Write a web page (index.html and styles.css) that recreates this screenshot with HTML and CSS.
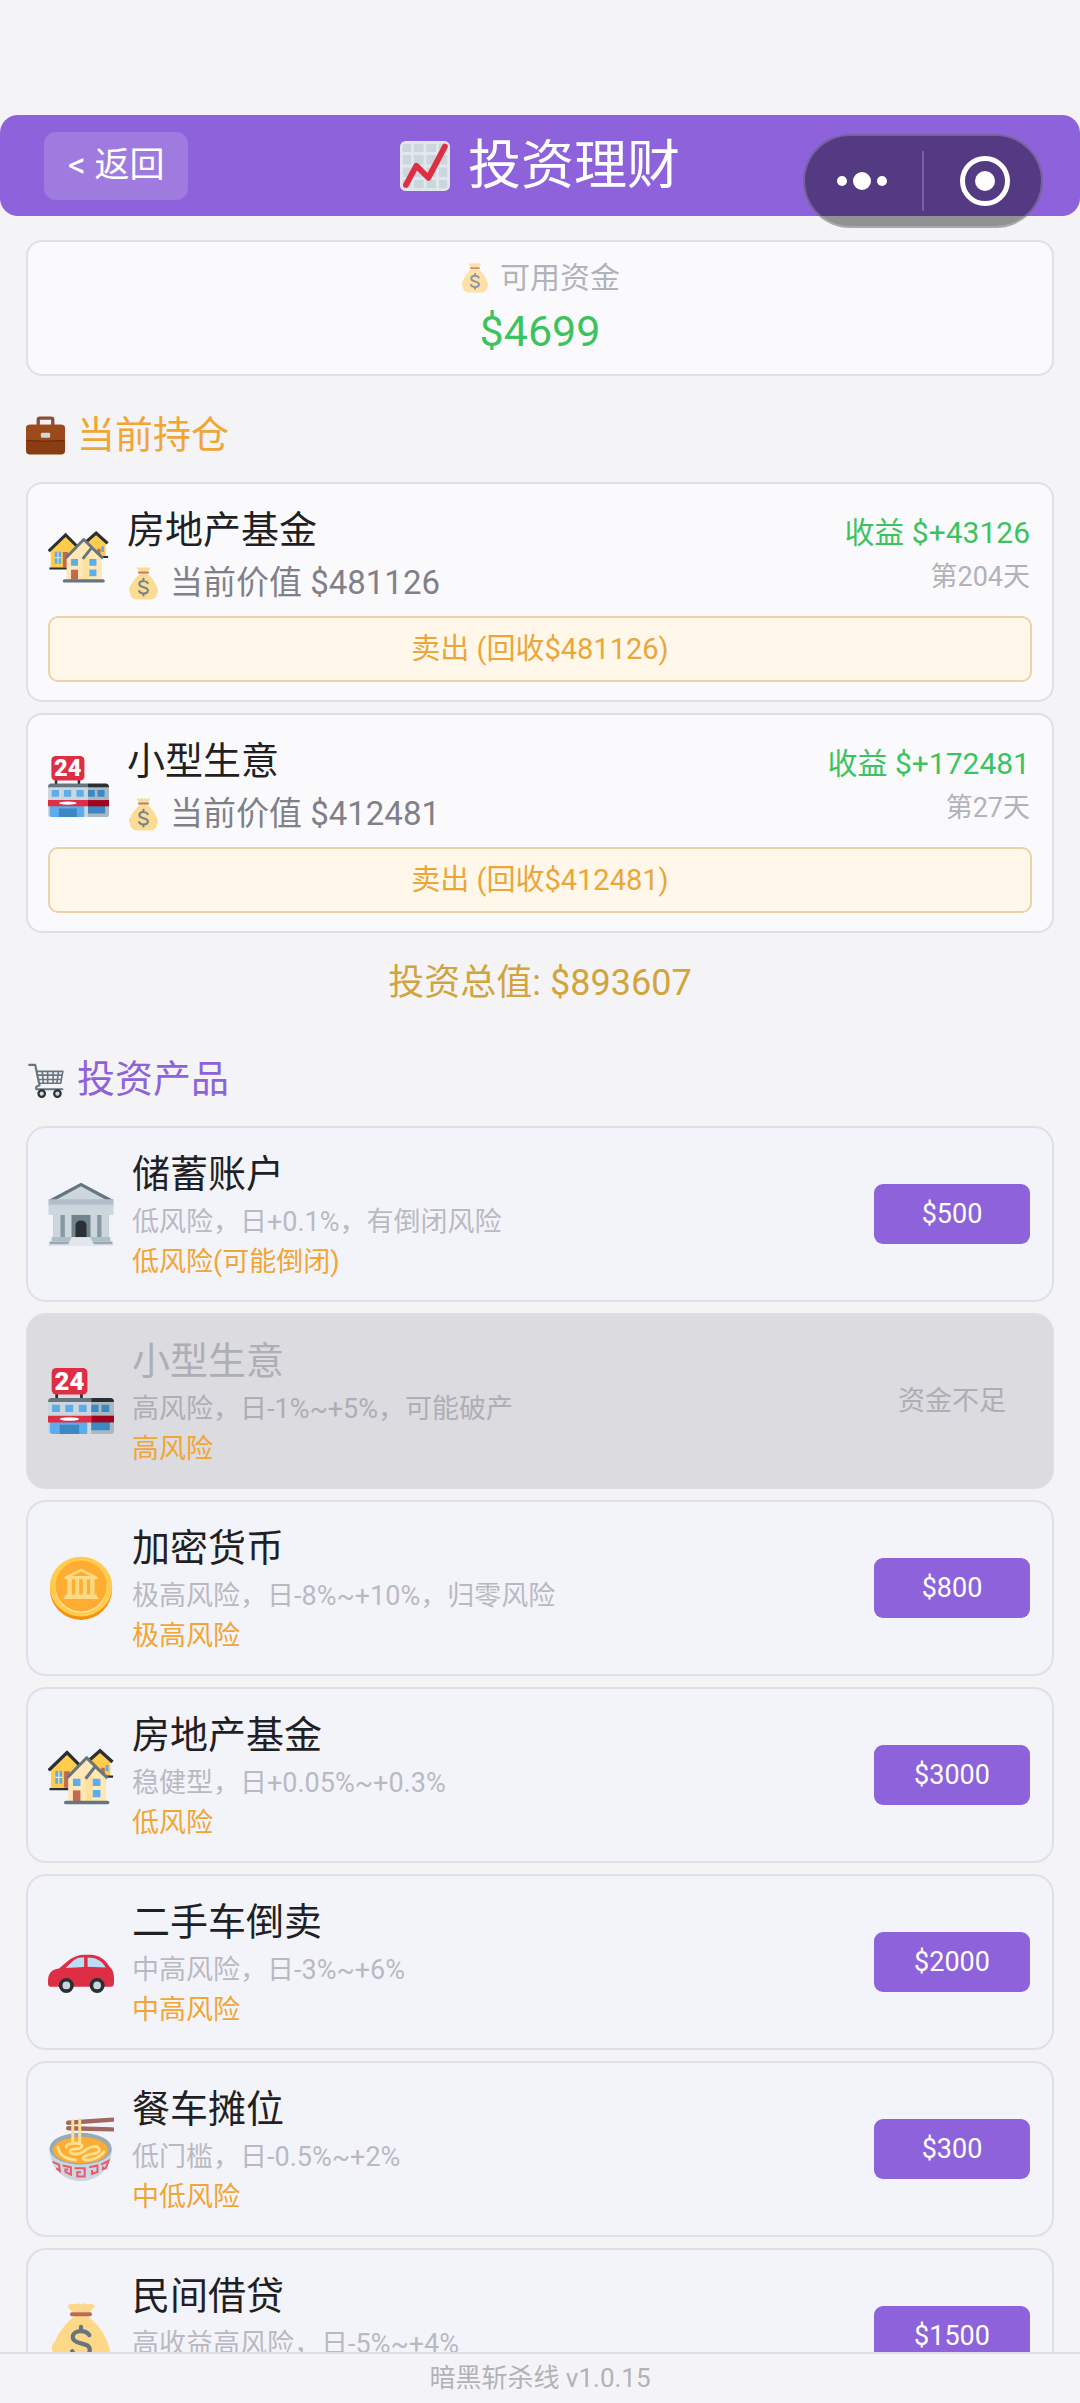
FILE: index.html
```html
<!DOCTYPE html>
<html lang="zh-CN">
<head>
    <meta charset="UTF-8">
    <meta name="viewport" content="width=device-width, initial-scale=1.0">
    <title>投资理财</title>
    <link rel="stylesheet" href="styles.css">
</head>
<body>
    <!-- icon sprite -->
    <svg class="sprite" aria-hidden="true">
        <symbol id="chart" viewBox="0 0 36 36">
            <rect width="36" height="36" rx="4" fill="#e1e8ed"/>
            <path fill="#ccd6dd" d="M2 2h6v6H2zM10 2h7v6h-7zM19 2h7v6h-7zM28 2h6v6h-6zM2 10h6v7H2zM10 10h7v7h-7zM19 10h7v7h-7zM28 10h6v7h-6zM2 19h6v7H2zM10 19h7v7h-7zM19 19h7v7h-7zM28 19h6v7h-6zM2 28h6v6H2zM10 28h7v6h-7zM19 28h7v6h-7zM28 28h6v6h-6z"/>
            <path d="M4.3 31.6L11.8 17.8L20.4 26.5L32.3 4" fill="none" stroke="#dd2e44" stroke-width="4.2" stroke-linecap="round" stroke-linejoin="round"/>
        </symbol>
        <symbol id="bag" viewBox="0 0 36 36">
            <path fill="#fdd888" d="M14.5 7C9 12 5 17 4.2 20.5C2.4 22 1.8 24 2.3 26C2.8 27.4 3.4 28 3.6 29C4 33 7 35.5 11 35.5H25C29.5 35.5 32 33 32.3 30C34 28.6 34.6 26 33 23C31.5 17 27 11.500 21.500 7z"/>
            <path fill="#fdd888" d="M13.300 5L10.700 2C11 .2 13 0 14 1C15 0 17 0 18 1C19 0 21 0 22 1C23 0 25 .2 25.300 2L22.700 5z"/>
            <rect x="12" y="5" width="12" height="2.200" rx="1" fill="#bf6952"/>
            <path fill="none" stroke="#67757f" stroke-width="2.300" stroke-linecap="round" d="M18 13v2M22.500 17.500C21.500 15.800 19.800 15.300 18 15.300C15.500 15.300 13.500 16.500 13.500 18.600C13.500 20.900 15.500 21.500 18 22C20.700 22.600 22.800 23.200 22.800 25.600C22.800 27.800 20.600 28.900 18 28.900C15.800 28.900 14 28.100 13.200 26.300M18 29v2"/>
        </symbol>
        <symbol id="briefcase" viewBox="0 0 36 36">
            <path d="M11.300 9V3.500Q11.300 2 12.800 2H23.200Q24.700 2 24.700 3.500V9" fill="none" stroke="#8a4b38" stroke-width="3"/>
            <rect y="8" width="36" height="27.500" rx="3.500" fill="#8a3c12"/>
            <path d="M0 11.500Q0 8 3.500 8H32.500Q36 8 36 11.500V21Q36 23 34 23H2Q0 23 0 21z" fill="#9c4a1a"/>
            <path d="M.5 22.500Q18 24 35.500 22.500" fill="none" stroke="#6b2b0c" stroke-width="1"/>
            <rect x="13.700" y="15.500" width="8.600" height="4.500" rx="1" fill="#ccd6dd"/>
        </symbol>
        <symbol id="cart" viewBox="0 0 36 36">
            <g fill="none" stroke="#66757f" stroke-linecap="round" stroke-linejoin="round">
                <path stroke-width="2" d="M3 4.500H8.500L12.500 23.500Q8.500 24 9.500 27H33.500"/>
                <path stroke-width="1.500" d="M10 10.500H34L32 21.500H12.200M10.500 14H33.500M11.500 18H32.500M15 10.500L16 21.500M20 10.500V21.500M25 10.500V21.500M30 10.500L28.500 21.500"/>
            </g>
            <circle cx="14.500" cy="31" r="3" fill="#ccd6dd" stroke="#292f33" stroke-width="2"/>
            <circle cx="29" cy="31" r="3" fill="#ccd6dd" stroke="#292f33" stroke-width="2"/>
        </symbol>
        <symbol id="houses" viewBox="0 0 36 36">
            <g transform="translate(0 1)">
                <path fill="#ffcc4d" d="M22 9.500L28.400 4L34 9.500V17.500H22z"/>
                <path fill="#ffcc4d" d="M1.600 14L10.400 5L19 14V24.500H1.600z"/>
                <path fill="#c1694f" d="M29 13h2v4h-2zM8.800 15h3v9h-3z"/>
                <path fill="#5dadec" d="M31.500 11.500h1.500v3.500h-1.500zM4 14.800h3.700v7H4z"/>
                <path stroke="#ffe8b6" stroke-width=".6" d="M4 18.300H7.700M5.900 14.800V21.800"/>
                <path fill="none" stroke="#292f33" stroke-width="1.800" d="M.4 14.500L10.400 4.800L18 12.400M22.500 9L28.400 3.800L35.200 9.900"/>
                <path stroke="#292f33" stroke-width="1.200" d="M.8 24.700H12M30 17.900H35.500"/>
                <path fill="#ffe8b6" d="M11 18L21 8L26 12.500L31.700 18V31.500H11z"/>
                <path fill="#ffd983" d="M20.600 19L24 14.500V31H20.600z" opacity=".55"/>
                <path fill="none" stroke="#66757f" stroke-width="1.700" stroke-linejoin="round" d="M10.500 18.500L21.100 7.600L26.200 12.600M20.500 19L25.800 12.300L32.500 18.700"/>
                <path fill="#5dadec" d="M13.600 19h4.100v4h-4.100zM24.400 19h4.200v4h-4.200zM24.400 25.200h4.200v4h-4.200z"/>
                <path fill="#c1694f" d="M13.600 25.400h4.100v5.800h-4.100z"/>
                <rect x="8.700" y="31" width="24.800" height="2" rx="1" fill="#66757f"/>
            </g>
        </symbol>
        <symbol id="store" viewBox="0 0 36 36">
            <path fill="#292f33" d="M4 13h1.500v4H4zM17.500 13h1.500v4h-1.500z"/>
            <rect x="2" width="19.500" height="14.500" rx="2.500" fill="#dd2e44"/>
            <text class="store-sign" x="11.700" y="12" text-anchor="middle">24</text>
            <path fill="#66757f" d="M0 18.500Q0 16.300 2 16.300H23.600V19H0z"/>
            <path fill="#292f33" d="M23.600 16.300H34Q36 16.300 36 18.500V19H23.600z"/>
            <path fill="#ccd6dd" d="M0 18.500H23.600V36H1.500Q0 36 0 34.500z"/>
            <path fill="#aab8c2" d="M23.600 18.500H36V34.500Q36 36 34.500 36H23.600z"/>
            <path fill="#5dadec" d="M2.200 20h4.300v4H2.200zM9.400 20h4.300v4H9.400zM16.800 20h4.300v4h-4.300zM1 29.500H21.400V36H2.500Q1 36 1 34.500z"/>
            <path fill="#3b88c3" d="M23.600 20h4v4h-4zM29.200 20h4.200v4h-4.200zM6.400 31H17V36H6.400zM23.600 29.500H33.700V34H23.600z"/>
            <path fill="#dd2e44" d="M0 26H23.600V29.700H0z"/>
            <path fill="#a0041e" d="M23.600 26H36V29.700H23.600z"/>
            <ellipse cx="11.700" cy="27.800" rx="5.200" ry="1" fill="#fff"/>
        </symbol>
        <symbol id="bank" viewBox="0 0 36 36">
            <path fill="#8899a6" d="M3 18H33V31H3z"/>
            <path fill="#66757f" d="M18 1L36 10.500H0z"/>
            <path fill="#ccd6dd" d="M18 2.800L32 10.500H4z"/>
            <path fill="#b0bec7" d="M.3 10H35.700V13.500H.3z"/>
            <path fill="#ccd6dd" d="M.3 13H35.700V18.500H.3zM3 18.500H6.800V31H3zM9.200 18.500H12.800V31H9.200zM23.200 18.500H26.800V31H23.200zM29.200 18.500H33V31H29.200z"/>
            <path fill="#66757f" d="M13 18.500H23V31H13z" opacity=".6"/>
            <path fill="#292f33" d="M15 31V24.500Q15 21.500 18 21.500T21 24.500V31z"/>
            <path fill="#b0bec7" d="M2 30.500H34V33H2z"/>
            <path fill="#99aab5" d="M.8 33H35.200V35H.8z"/>
            <path fill="#e1e8ed" d="M13 30.700H23L25 34.500H36V35.500H0V34.500H11z"/>
        </symbol>
        <symbol id="coin" viewBox="0 0 36 36">
            <circle cx="18" cy="18.400" r="17" fill="#f4900c"/>
            <ellipse cx="18" cy="17.300" rx="17" ry="16.300" fill="#ffcc4d"/>
            <ellipse cx="18" cy="17.500" rx="14" ry="14" fill="#ffe8b6"/>
            <ellipse cx="18" cy="16.900" rx="14" ry="13.900" fill="#ffac33"/>
            <path fill="#ffd983" d="M18 7.500L27 11.800V13.200H9V11.800zM10.600 13H13V22H10.600zM14.800 13H17V22H14.800zM19 13H21.200V22H19zM23 13H25.400V22H23zM9.600 21.500H26.400L27.500 24H8.500z"/>
            <path fill="#ffac33" d="M18 9L23 11.500H13z"/>
        </symbol>
        <symbol id="car" viewBox="0 0 36 36">
            <path fill="#dd2e44" d="M0 28.500C0 24 2 22 6 21.500C10 18.500 13 14 20 14H23C28 14 31.500 17 33.500 20.500C35.300 22 36 24 36 27V29.500Q36 31.500 34.300 31.500H1.700Q0 31.500 0 29.800z"/>
            <path fill="#bbddf5" d="M9.600 21.300L14 17C15.500 15.800 17 15.500 19.700 15.500V20.700zM21.600 15.500C26 15.500 29.500 17.200 31.500 21L21.600 20.600z"/>
            <circle cx="10" cy="30.800" r="3.100" fill="#ccd6dd" stroke="#292f33" stroke-width="2"/>
            <circle cx="26.800" cy="30.800" r="3.100" fill="#ccd6dd" stroke="#292f33" stroke-width="2"/>
        </symbol>
        <symbol id="noodles" viewBox="0 0 36 36">
            <path fill="#ccd6dd" d="M.9 18C.9 28.500 8.500 35.500 17.800 35.500S34.800 28.500 34.800 18z"/>
            <ellipse cx="17.800" cy="17.800" rx="17" ry="8.700" fill="#99aab5"/>
            <ellipse cx="17.800" cy="18.600" rx="15" ry="7.200" fill="#ffac33"/>
            <path d="M11 3.700L35.300 2M11 6.700L35.300 7.300" stroke="#a0695f" stroke-width="2.400" stroke-linecap="round"/>
            <g fill="none" stroke="#ffe08f" stroke-width="1.600" stroke-linecap="round">
                <path d="M13.500 2.500V14.500M17.300 2V14.500"/>
                <path d="M5.500 17C6 21 9 23.500 15 24M10 17C10 14.500 19 14 18.500 16.500C18 19 13 17 12 19C11.500 21 17 21.500 20 19C23 16 28 16 28 18.500C28 21 20 20.500 19 23C20 25 28 23.500 30.500 19.500"/>
            </g>
            <path fill="none" stroke="#e75a70" stroke-width="1.100" d="M2.500 25L6 26.500L6.500 30L4.500 28.500M8 27L12.500 28V32L9.500 30.500V29.200H11M14.500 28.500H20V33H16V30.700H18M22.500 28L27 27V30.500L24 31.500V29.500M29 26.500L33 24.500L31.500 28.500L30 29V27.500"/>
        </symbol>
    </svg>

    <div class="app">
        <header class="topbar">
            <button class="back-button" type="button">&lt; 返回</button>
            <h1 class="page-title"><svg class="icon-title"><use href="#chart"/></svg>投资理财</h1>
        </header>

        <main class="content">
            <section class="balance">
                <p class="balance-label"><svg class="icon-small faded"><use href="#bag"/></svg>可用资金</p>
                <p class="balance-amount">$4699</p>
            </section>

            <h2 class="section-title orange"><svg class="icon-section"><use href="#briefcase"/></svg>当前持仓</h2>
            <div class="list">
                <article class="holding">
                    <div class="holding-row">
                        <svg class="icon-holding"><use href="#houses"/></svg>
                        <div class="info">
                            <h3 class="name">房地产基金</h3>
                            <p class="value"><svg class="icon-value"><use href="#bag"/></svg>当前价值 $481126</p>
                        </div>
                        <div class="result">
                            <p class="profit">收益 $+43126</p>
                            <p class="days">第204天</p>
                        </div>
                    </div>
                    <button class="sell-button" type="button">卖出 (回收$481126)</button>
                </article>
                <article class="holding">
                    <div class="holding-row">
                        <svg class="icon-holding"><use href="#store"/></svg>
                        <div class="info">
                            <h3 class="name">小型生意</h3>
                            <p class="value"><svg class="icon-value"><use href="#bag"/></svg>当前价值 $412481</p>
                        </div>
                        <div class="result">
                            <p class="profit">收益 $+172481</p>
                            <p class="days">第27天</p>
                        </div>
                    </div>
                    <button class="sell-button" type="button">卖出 (回收$412481)</button>
                </article>
            </div>
            <p class="total">投资总值: $893607</p>

            <h2 class="section-title purple"><svg class="icon-section"><use href="#cart"/></svg>投资产品</h2>
            <div class="list">
                <article class="product">
                    <svg class="icon-product"><use href="#bank"/></svg>
                    <div class="info">
                        <h3 class="name">储蓄账户</h3>
                        <p class="desc">低风险，日+0.1%，有倒闭风险</p>
                        <p class="risk">低风险(可能倒闭)</p>
                    </div>
                    <button class="buy-button" type="button">$500</button>
                </article>
                <article class="product locked">
                    <svg class="icon-product"><use href="#store"/></svg>
                    <div class="info">
                        <h3 class="name">小型生意</h3>
                        <p class="desc">高风险，日-1%~+5%，可能破产</p>
                        <p class="risk">高风险</p>
                    </div>
                    <button class="buy-button" type="button" disabled>资金不足</button>
                </article>
                <article class="product">
                    <svg class="icon-product"><use href="#coin"/></svg>
                    <div class="info">
                        <h3 class="name">加密货币</h3>
                        <p class="desc">极高风险，日-8%~+10%，归零风险</p>
                        <p class="risk">极高风险</p>
                    </div>
                    <button class="buy-button" type="button">$800</button>
                </article>
                <article class="product">
                    <svg class="icon-product"><use href="#houses"/></svg>
                    <div class="info">
                        <h3 class="name">房地产基金</h3>
                        <p class="desc">稳健型，日+0.05%~+0.3%</p>
                        <p class="risk">低风险</p>
                    </div>
                    <button class="buy-button" type="button">$3000</button>
                </article>
                <article class="product">
                    <svg class="icon-product"><use href="#car"/></svg>
                    <div class="info">
                        <h3 class="name">二手车倒卖</h3>
                        <p class="desc">中高风险，日-3%~+6%</p>
                        <p class="risk">中高风险</p>
                    </div>
                    <button class="buy-button" type="button">$2000</button>
                </article>
                <article class="product">
                    <svg class="icon-product"><use href="#noodles"/></svg>
                    <div class="info">
                        <h3 class="name">餐车摊位</h3>
                        <p class="desc">低门槛，日-0.5%~+2%</p>
                        <p class="risk">中低风险</p>
                    </div>
                    <button class="buy-button" type="button">$300</button>
                </article>
                <article class="product">
                    <svg class="icon-product"><use href="#bag"/></svg>
                    <div class="info">
                        <h3 class="name">民间借贷</h3>
                        <p class="desc">高收益高风险，日-5%~+4%</p>
                        <p class="risk">高风险</p>
                    </div>
                    <button class="buy-button" type="button">$1500</button>
                </article>
            </div>
        </main>

        <footer class="version">暗黑斩杀线 v1.0.15</footer>
    </div>

    <!-- floating menu capsule -->
    <div class="capsule">
        <button class="capsule-button" type="button" aria-label="更多">
            <svg width="52" height="52" viewBox="0 0 52 52" fill="#fff"><circle cx="6" cy="26" r="5"/><circle cx="26" cy="26" r="9"/><circle cx="46" cy="26" r="5"/></svg>
        </button>
        <span class="capsule-line"></span>
        <button class="capsule-button" type="button" aria-label="关闭">
            <svg width="52" height="52" viewBox="0 0 52 52" fill="#fff"><circle cx="26" cy="26" r="22.500" fill="none" stroke="#fff" stroke-width="5"/><circle cx="26" cy="26" r="10"/></svg>
        </button>
    </div>
</body>
</html>
```
FILE: styles.css
```css
* {
    margin: 0;
    padding: 0;
    box-sizing: border-box;
}

body {
    font-family: Roboto, "Noto Sans CJK SC", sans-serif;
    background: #f4f4f7;
    color: #1f1f24;
}

button {
    font-family: inherit;
    border: none;
    cursor: pointer;
}

h1, h2, h3 { font-weight: 400; }

svg { flex-shrink: 0; }

.sprite { display: none; }

.app {
    display: flex;
    flex-direction: column;
    height: 100vh;
    padding-top: 115px;
}

/* header */
.topbar {
    display: grid;
    grid-template-columns: 1fr auto 1fr;
    align-items: center;
    flex-shrink: 0;
    padding: 17px 44px 16px;
    background: #8d62da;
    border-radius: 18px;
}

.back-button {
    justify-self: start;
    padding: 12px 24px;
    font-size: 35px;
    line-height: 44px;
    color: white;
    background: rgba(255, 255, 255, 0.16);
    border-radius: 12px;
}

.page-title {
    display: flex;
    align-items: center;
    gap: 18px;
    font-size: 53px;
    line-height: 68px;
    color: white;
}

.icon-title {
    width: 50px;
    height: 50px;
}

.content {
    flex: 1;
    min-height: 0;
    overflow-y: auto;
    scrollbar-width: none;
    padding: 24px 26px;
}

/* available money */
.balance {
    padding: 16px;
    background: #fafafd;
    border: 2px solid #dfdfe4;
    border-radius: 16px;
}

.balance-label {
    display: flex;
    justify-content: center;
    align-items: center;
    gap: 10px;
    margin-bottom: 6px;
    font-size: 30px;
    line-height: 40px;
    color: #b2b2b8;
}

.icon-small {
    width: 30px;
    height: 30px;
}

.faded { opacity: 0.75; }

.balance-amount {
    font-size: 43px;
    line-height: 54px;
    text-align: center;
    color: #3cc360;
}

.section-title {
    display: flex;
    align-items: center;
    gap: 12px;
    margin: 33px 0 21px;
    font-size: 38px;
    line-height: 52px;
}

.icon-section {
    width: 39px;
    height: 39px;
}

.orange { color: #f0a535; }
.purple { color: #8d62da; }

.list {
    display: flex;
    flex-direction: column;
    gap: 11px;
}

.info {
    flex: 1;
    min-width: 0;
}

.name {
    font-size: 38px;
    line-height: 56px;
}

/* current holdings */
.holding {
    padding: 18px 20px;
    background: #fafafd;
    border: 2px solid #dfdfe4;
    border-radius: 16px;
}

.holding-row {
    display: flex;
    align-items: center;
    gap: 18px;
    margin-bottom: 8px;
}

.icon-holding {
    width: 61px;
    height: 61px;
}

.value {
    display: flex;
    align-items: center;
    gap: 10px;
    font-size: 33px;
    line-height: 50px;
    color: #808088;
}

.icon-value {
    width: 33px;
    height: 33px;
    opacity: 0.9;
}

.result {
    text-align: right;
    padding-right: 2px;
    line-height: 44px;
}

.profit {
    font-size: 30px;
    color: #3cc360;
}

.days {
    font-size: 27px;
    color: #b2b2b8;
}

.sell-button {
    display: block;
    width: 100%;
    padding: 11px;
    font-size: 29px;
    line-height: 40px;
    color: #eba63a;
    background: #fff8ea;
    border: 2px solid #ead3a6;
    border-radius: 10px;
}

.total {
    margin: 26px 0 46px;
    font-size: 36px;
    line-height: 48px;
    text-align: center;
    color: #d2a43c;
}

/* products */
.product {
    display: flex;
    align-items: center;
    gap: 18px;
    padding: 18px 22px 18px 20px;
    background: #f3f4fa;
    border: 2px solid #dfdfe6;
    border-radius: 20px;
}

.icon-product {
    width: 66px;
    height: 66px;
}

.desc,
.risk {
    font-size: 27px;
    line-height: 40px;
}

.desc { color: #b9b9c2; }
.risk { color: #f0a535; }

.buy-button {
    min-width: 156px;
    padding: 10px;
    font-size: 27px;
    line-height: 40px;
    color: white;
    background: #8d62da;
    border-radius: 9px;
}

.locked {
    background: #dcdbe0;
    border-color: #dddde2;
}

.locked .name,
.locked .desc { color: #aeaeb5; }

.locked .buy-button {
    color: #aeaeb3;
    background: none;
    cursor: default;
}

.store-sign {
    font-family: Roboto, sans-serif;
    font-size: 14px;
    font-weight: 900;
    fill: white;
}

.version {
    flex-shrink: 0;
    padding: 4px 0 5px;
    font-size: 26px;
    line-height: 40px;
    text-align: center;
    color: #b2b2b8;
    border-top: 2px solid #dedee3;
}

/* menu capsule stays above the page */
.capsule {
    position: absolute;
    top: 134px;
    right: 37px;
    display: flex;
    align-items: center;
    gap: 4px;
    width: 240px;
    height: 94px;
    background: rgba(0, 0, 0, 0.4);
    border: 2px solid rgba(255, 255, 255, 0.2);
    border-radius: 47px;
}

.capsule-button {
    flex: 1;
    display: flex;
    justify-content: center;
    background: none;
}

.capsule-line {
    width: 2px;
    height: 60px;
    background: rgba(255, 255, 255, 0.2);
}
```
